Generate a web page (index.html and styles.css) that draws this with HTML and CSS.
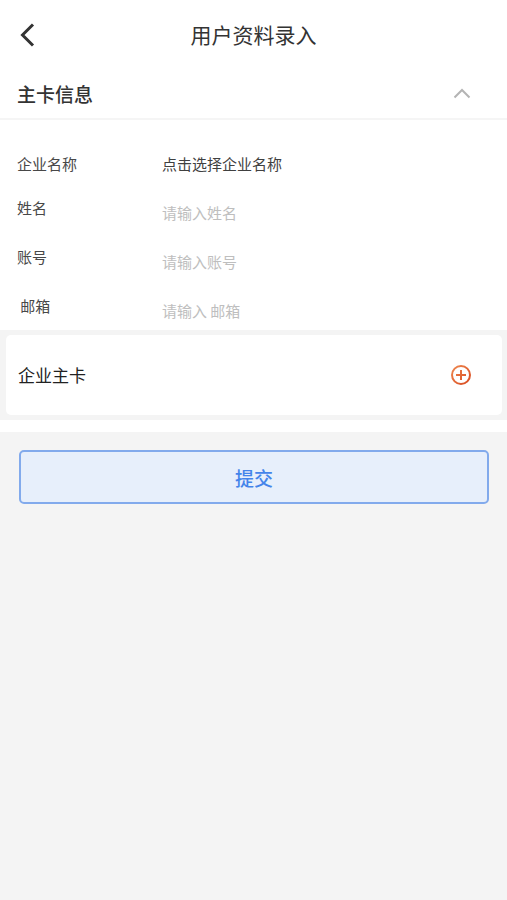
FILE: index.html
```
<!DOCTYPE html>
<html lang="zh-CN">
	<head>
		<meta charset="utf-8">
		<meta name="viewport" content="width=device-width, initial-scale=1.0">
		<title>用户资料录入</title>
		<link rel="stylesheet" href="styles.css">
	</head>
	<body>
		<header class="banner">
			<a href="#" class="back" aria-label="返回">
				<svg width="18" height="26" viewBox="0 0 18 26"><path d="M15 2.5L4.5 13L15 23.5"/></svg>
			</a>
			<h1>用户资料录入</h1>
		</header>

		<form>
			<section class="info">
				<div class="info-head">
					<h2>主卡信息</h2>
					<button type="button" class="fold" aria-label="收起">
						<svg width="18" height="12" viewBox="0 0 18 12"><path d="M1.500 9.500L9 2L16.500 9.500"/></svg>
					</button>
				</div>
				<div class="fields">
					<div class="row">
						<label for="company">企业名称</label>
						<button type="button" id="company" class="pick">点击选择企业名称</button>
					</div>
					<div class="row">
						<label for="name">姓名</label>
						<input type="text" id="name" placeholder="请输入姓名">
					</div>
					<div class="row">
						<label for="account">账号</label>
						<input type="text" id="account" placeholder="请输入账号">
					</div>
					<div class="row">
						<label for="email">&nbsp;邮箱</label>
						<input type="text" id="email" placeholder="请输入 邮箱">
					</div>
				</div>
			</section>

			<section class="card-wrap">
				<div class="card">
					<h3>企业主卡</h3>
					<button type="button" class="add" aria-label="添加">
						<svg width="22" height="22" viewBox="0 0 22 22">
							<defs>
								<linearGradient id="orange" gradientUnits="userSpaceOnUse" x1="2" y1="2" x2="20" y2="20">
									<stop offset="0" stop-color="#ee8850"/>
									<stop offset="1" stop-color="#d84a20"/>
								</linearGradient>
							</defs>
							<circle cx="11" cy="11" r="9"/>
							<path d="M11 6V16M6 11H16"/>
						</svg>
					</button>
				</div>
			</section>

			<div class="bottom">
				<button type="submit" class="submit">提交</button>
			</div>
		</form>
	</body>
</html>
```

FILE: styles.css
```
* {
	box-sizing: border-box;
}

body {
	margin: 0;
	background-color: #f4f4f4;
	color: #333;
	font-family: "Noto Sans CJK SC", sans-serif;
	font-size: 15px;
}

h1, h2, h3 {
	margin: 0;
	padding-bottom: 2px;
}

button, input {
	margin: 0;
	padding: 0;
	border: 0;
	background: none;
	color: inherit;
	font: inherit;
}

svg {
	display: block;
	fill: none;
}

/* 顶部标题 */
.banner {
	display: grid;
	grid-template-columns: 60px 1fr 60px;
	align-items: center;
	height: 70px;
	background-color: #fff;
}

.banner h1 {
	font-size: 21px;
	font-weight: 400;
	text-align: center;
}

.back {
	padding-left: 18px;
}

.back svg {
	stroke: #333;
	stroke-width: 3;
}

/* 主卡信息 */
.info {
	background-color: #fff;
}

.info-head {
	display: flex;
	justify-content: space-between;
	align-items: center;
	height: 50px;
	padding: 0 36px 0 17px;
	border-bottom: 2px solid #f5f5f5;
}

.info-head h2 {
	font-size: 19px;
	font-weight: 500;
}

.fold svg {
	stroke: #b4b4b4;
	stroke-width: 2;
}

.fields {
	display: grid;
	gap: 5px;
	padding: 24px 17px 0;
}

.row {
	display: grid;
	grid-template-columns: 145px 1fr;
	line-height: 39px;
}

.row label {
	color: #484848;
}

.row input {
	width: 100%;
	height: 39px;
	margin-top: 5px;
}

.row input::placeholder {
	color: #bebebe;
	opacity: 1;
}

.pick {
	text-align: left;
	color: #404040;
}

/* 企业主卡 */
.card-wrap {
	padding: 5px 5px 5px 6px;
	border-bottom: 12px solid #fff;
}

.card {
	display: flex;
	justify-content: space-between;
	align-items: center;
	height: 80px;
	padding: 0 30px 0 12px;
	border-radius: 5px;
	background-color: #fff;
}

.card h3 {
	font-size: 17px;
	font-weight: 400;
	color: #222;
}

.add svg {
	stroke: url(#orange);
	stroke-width: 2;
}

/* 提交 */
.bottom {
	padding: 18px 18px 18px 19px;
}

.submit {
	display: block;
	width: 100%;
	height: 54px;
	border: 2px solid #82aaec;
	border-radius: 5px;
	background-color: #e7effb;
	color: #4484ea;
	font-size: 19px;
	font-weight: 500;
}
```
